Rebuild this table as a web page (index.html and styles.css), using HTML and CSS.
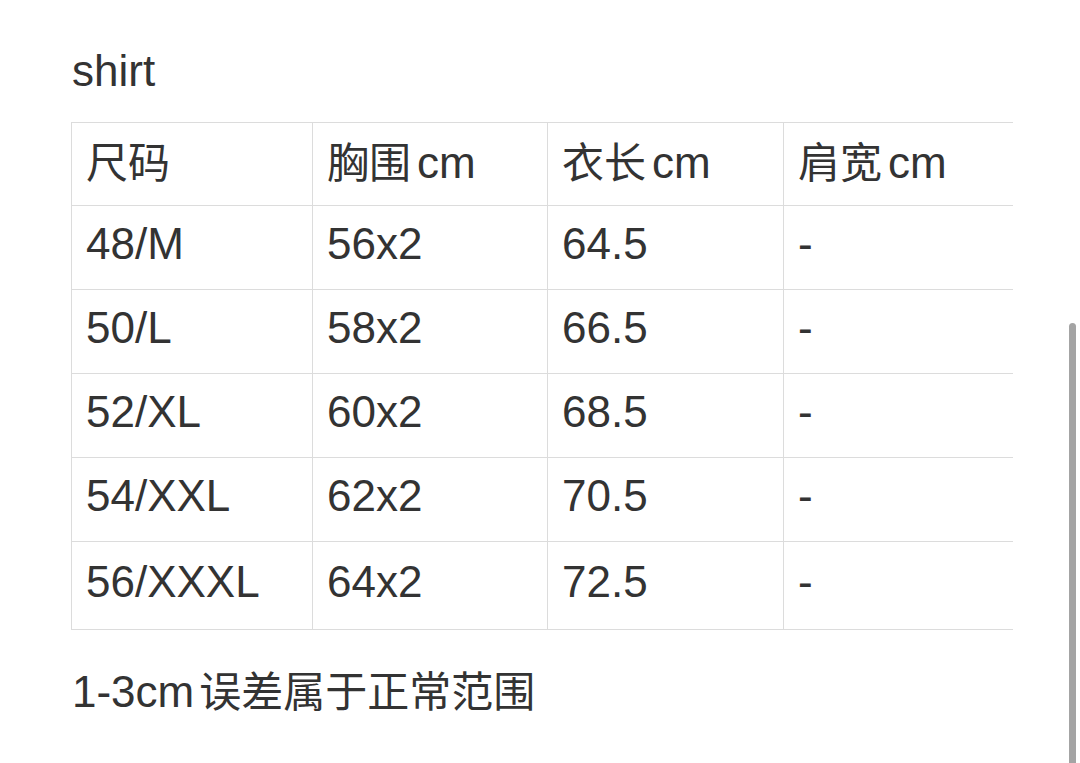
FILE: index.html
```html
<!DOCTYPE html>
<html lang="zh">
<head>
<meta charset="utf-8">
<title>shirt</title>
<link rel="stylesheet" href="styles.css">
</head>
<body>
<main class="page">
  <p class="title">shirt</p>
  <div class="table-wrap">
    <table class="size-table">
      <tr class="head">
        <td><span class="zh">尺码</span></td>
        <td><span class="zh">胸围</span><span class="unit">cm</span></td>
        <td><span class="zh">衣长</span><span class="unit">cm</span></td>
        <td><span class="zh">肩宽</span><span class="unit">cm</span></td>
      </tr>
      <tr><td>48/M</td><td>56x2</td><td>64.5</td><td>-</td></tr>
      <tr><td>50/L</td><td>58x2</td><td>66.5</td><td>-</td></tr>
      <tr><td>52/XL</td><td>60x2</td><td>68.5</td><td>-</td></tr>
      <tr><td>54/XXL</td><td>62x2</td><td>70.5</td><td>-</td></tr>
      <tr class="last"><td>56/XXXL</td><td>64x2</td><td>72.5</td><td>-</td></tr>
    </table>
  </div>
  <p class="note">1-3cm<span class="zh note-zh">误差属于正常范围</span></p>
</main>
<div class="scrollbar"></div>
</body>
</html>
```

FILE: styles.css
```css
html, body {
  margin: 0;
  padding: 0;
  background: #ffffff;
  overflow: hidden;
}
body {
  font-family: "Liberation Sans", "Noto Sans CJK SC", sans-serif;
  color: #333333;
  height: 763px;
}
.page {
  padding: 46px 0 0 71px;
}
.title {
  margin: 0 0 0 1px;
  font-size: 44px;
  line-height: 50px;
}
.table-wrap {
  margin-top: 26px;
  width: 942px;
  overflow: hidden;
}
.size-table {
  border-collapse: collapse;
  font-size: 44px;
  table-layout: fixed;
  width: 948px;
}
.size-table td {
  box-sizing: border-box;
  border: 1px solid #dcdcdc;
  padding: 0 14px 8px 14px;
  height: 84px;
  line-height: 40px;
  vertical-align: middle;
  white-space: nowrap;
}
.size-table td:nth-child(1) { width: 241px; }
.size-table td:nth-child(2) { width: 235px; }
.size-table td:nth-child(3) { width: 236px; }
.size-table tr.head td { height: 83px; padding-bottom: 6px; }
.size-table tr.last td { height: 88px; }
.zh {
  font-family: "Noto Sans CJK SC", sans-serif;
  font-size: 42px;
}
.unit {
  margin-left: 6px;
}
.note-zh {
  margin-left: 5px;
}
.note {
  margin: 34px 0 0 1px;
  font-size: 44px;
  line-height: 50px;
}
.scrollbar {
  position: absolute;
  right: 4px;
  top: 323px;
  width: 7px;
  height: 450px;
  background: #a4a4a4;
  border-radius: 4px;
}
```
